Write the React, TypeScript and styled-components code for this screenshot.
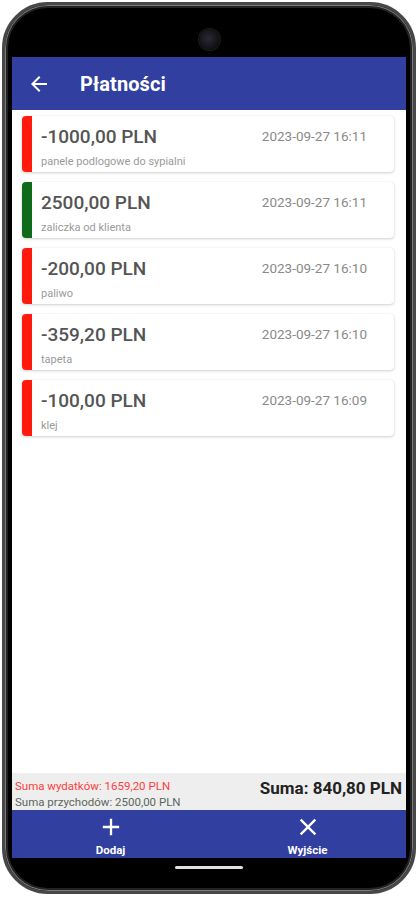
import React from "react";
import styled, { createGlobalStyle } from "styled-components";

const GlobalStyle = createGlobalStyle`
  html, body { margin: 0; padding: 0; background: #ffffff; }
  body { font-family: Roboto, "Noto Sans", "Liberation Sans", sans-serif; }
  * { box-sizing: border-box; }
`;

const Phone = styled.div`
  width: 414px;
  height: 892px;
  margin: 2px auto 0;
  border: 3px solid #484848;
  border-radius: 46px;
  background: #000;
  box-shadow: inset 0 0 0 1px #7a7a7a, inset 0 0 0 3px #222;
  display: flex;
  flex-direction: column;
  padding: 0 7px;
  overflow: hidden;
`;

const StatusBar = styled.div`
  height: 52px;
  flex: none;
  display: flex;
  justify-content: center;
  padding-top: 24px;
`;

const Camera = styled.div`
  width: 21px;
  height: 21px;
  border-radius: 50%;
  background: radial-gradient(circle at 45% 45%, #2a2a3a 0%, #141418 55%, #0b0b0b 100%);
  box-shadow: 0 0 0 1px #1c1c1c;
`;

const Header = styled.div`
  height: 53px;
  flex: none;
  background: #3140a0;
  display: flex;
  align-items: center;
  padding-left: 15px;
  gap: 29px;
  color: #fff;
`;

const Title = styled.div`
  font-size: 20px;
  font-weight: 700;
  color: #fff;
  letter-spacing: 0.1px;
`;

const List = styled.div`
  flex: 1;
  background: #fff;
  display: flex;
  flex-direction: column;
  gap: 10px;
  padding: 6px 12px 0 10px;
`;

const Card = styled.div`
  height: 56px;
  display: flex;
  background: #fff;
  border-radius: 4px;
  box-shadow: 0 1px 3px rgba(0, 0, 0, 0.18), 0 0 1px rgba(0, 0, 0, 0.12);
`;

const Bar = styled.div<{ $color: string }>`
  width: 10px;
  flex: none;
  background: ${(p) => p.$color};
  border-radius: 4px 0 0 4px;
`;

const CardBody = styled.div`
  flex: 1;
  display: flex;
  flex-direction: column;
  padding: 9px 27px 0 9px;
`;

const TopRow = styled.div`
  display: flex;
  justify-content: space-between;
  align-items: flex-start;
`;

const Amount = styled.div`
  font-size: 19px;
  line-height: 24px;
  font-weight: 500;
  color: #555;
`;

const DateText = styled.div`
  font-size: 13.5px;
  line-height: 20px;
  color: #8a8a8a;
  padding-top: 1px;
`;

const Desc = styled.div`
  margin-top: 6px;
  font-size: 11px;
  line-height: 14px;
  color: #9a9a9a;
`;

const Summary = styled.div`
  height: 37px;
  flex: none;
  background: #eeeeee;
  display: flex;
  justify-content: space-between;
  padding: 3px 4px 0 3px;
`;

const SumLines = styled.div`
  display: flex;
  flex-direction: column;
  padding-top: 2px;
`;

const SumLine = styled.div<{ $color: string }>`
  font-size: 11.5px;
  line-height: 16px;
  color: ${(p) => p.$color};
`;

const Total = styled.div`
  font-size: 17px;
  font-weight: 700;
  line-height: 22px;
  color: #222;
  padding-top: 1px;
`;

const Nav = styled.div`
  height: 48px;
  flex: none;
  background: #3140a0;
  display: grid;
  grid-template-columns: 1fr 1fr;
`;

const NavItem = styled.div`
  display: flex;
  flex-direction: column;
  align-items: center;
  padding-top: 3px;
  gap: 2px;
  color: #fff;
`;

const NavLabel = styled.div`
  font-size: 11.5px;
  font-weight: 700;
  line-height: 14px;
  color: #fff;
`;

const HomeArea = styled.div`
  height: 33px;
  flex: none;
  display: flex;
  justify-content: center;
  padding-top: 8px;
`;

const HomeIndicator = styled.div`
  width: 68px;
  height: 3px;
  border-radius: 2px;
  background: #e0e0e0;
`;

const Icon = ({ d, size }: { d: string; size: number }) => (
  <svg width={size} height={size} viewBox="0 0 24 24" fill="#fff">
    <path d={d} />
  </svg>
);

const ARROW = "M20 11H7.83l5.59-5.59L12 4l-8 8 8 8 1.41-1.41L7.83 13H20v-2z";
const PLUS = "M19 13h-6v6h-2v-6H5v-2h6V5h2v6h6v2z";
const CLOSE =
  "M19 6.41L17.59 5 12 10.59 6.41 5 5 6.41 10.59 12 5 17.59 6.41 19 12 13.41 17.59 19 19 17.59 13.41 12z";

const RED = "#ff1a0d";
const GREEN = "#0d6b1a";

const payments = [
  { amount: "-1000,00 PLN", date: "2023-09-27 16:11", desc: "panele podlogowe do sypialni", color: RED },
  { amount: "2500,00 PLN", date: "2023-09-27 16:11", desc: "zaliczka od klienta", color: GREEN },
  { amount: "-200,00 PLN", date: "2023-09-27 16:10", desc: "paliwo", color: RED },
  { amount: "-359,20 PLN", date: "2023-09-27 16:10", desc: "tapeta", color: RED },
  { amount: "-100,00 PLN", date: "2023-09-27 16:09", desc: "klej", color: RED },
];

export default function App() {
  return (
    <>
      <GlobalStyle />
      <Phone>
        <StatusBar>
          <Camera />
        </StatusBar>
        <Header>
          <Icon d={ARROW} size={24} />
          <Title>Płatności</Title>
        </Header>
        <List>
          {payments.map((p, i) => (
            <Card key={i}>
              <Bar $color={p.color} />
              <CardBody>
                <TopRow>
                  <Amount>{p.amount}</Amount>
                  <DateText>{p.date}</DateText>
                </TopRow>
                <Desc>{p.desc}</Desc>
              </CardBody>
            </Card>
          ))}
        </List>
        <Summary>
          <SumLines>
            <SumLine $color="#ff4040">Suma wydatków: 1659,20 PLN</SumLine>
            <SumLine $color="#5c665c">Suma przychodów: 2500,00 PLN</SumLine>
          </SumLines>
          <Total>Suma: 840,80 PLN</Total>
        </Summary>
        <Nav>
          <NavItem>
            <Icon d={PLUS} size={28} />
            <NavLabel>Dodaj</NavLabel>
          </NavItem>
          <NavItem>
            <Icon d={CLOSE} size={28} />
            <NavLabel>Wyjście</NavLabel>
          </NavItem>
        </Nav>
        <HomeArea>
          <HomeIndicator />
        </HomeArea>
      </Phone>
    </>
  );
}
